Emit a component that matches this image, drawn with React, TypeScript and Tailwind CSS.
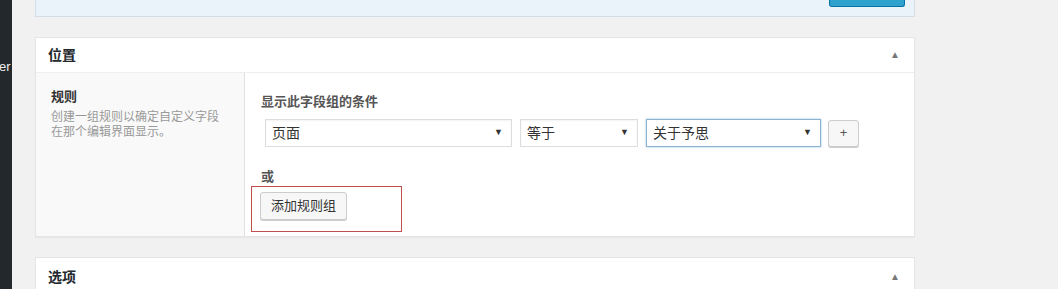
import React from "react";

const font = { fontFamily: '"Liberation Sans", "Noto Sans CJK SC", sans-serif' };

function Select({ value, width, focused = false }: { value: string; width: string; focused?: boolean }) {
    return (
        <div
            className={`${width} h-[28px] flex items-center justify-between pl-[6px] pr-[8px] bg-white border ${
                focused ? "border-[#8fb3cf] shadow-[0_0_2px_rgba(30,140,190,0.5)]" : "border-[#ddd] shadow-[inset_0_1px_2px_rgba(0,0,0,0.05)]"
            }`}
        >
            <span className="text-[14px] text-[#333]">{value}</span>
            <span className="text-[9px] text-[#333]">▼</span>
        </div>
    );
}

function Toggle() {
    return <span className="text-[10px] text-[#777] leading-none">▲</span>;
}

export default function App() {
    return (
        <div className="w-[1058px] h-[289px] overflow-hidden bg-[#f1f1f1] flex" style={font}>
            {/* Admin sidebar edge */}
            <div className="w-[12px] shrink-0 bg-[#23282d] flex">
                <span className="mt-[58px] h-[18px] text-[13px] text-[#eee] whitespace-nowrap leading-[18px] -ml-[1px]">er</span>
            </div>

            <div className="ml-[23px] w-[880px] shrink-0 flex flex-col">
                {/* Publish panel (cut off) */}
                <div className="h-[17px] shrink-0 bg-[#eaf2fa] border border-t-0 border-[#d5dde6] flex justify-end pr-[9px]">
                    <div className="w-[76px] h-[7px] bg-[#2ea2cc] border border-t-0 border-[#0074a2] rounded-b-[3px]" />
                </div>

                {/* 位置 */}
                <div className="mt-[20px] h-[200px] shrink-0 bg-white border border-[#e5e5e5] shadow-[0_1px_1px_rgba(0,0,0,0.04)] flex flex-col">
                    <div className="h-[35px] shrink-0 border-b border-[#eee] flex items-center justify-between pl-[12px] pr-[14px]">
                        <span className="text-[14px] font-bold text-[#23282d]">位置</span>
                        <Toggle />
                    </div>
                    <div className="flex flex-1">
                        <div className="w-[209px] shrink-0 bg-[#f9f9f9] border-r border-[#e1e1e1] pl-[15px] pt-[15px]">
                            <div className="text-[13px] font-bold text-[#333] leading-[18px]">规则</div>
                            <div className="mt-[4px] text-[12px] text-[#999] leading-[15px]">
                                创建一组规则以确定自定义字段
                                <br />
                                在那个编辑界面显示。
                            </div>
                        </div>
                        <div className="flex-1 pl-[16px] pt-[20px]">
                            <div className="text-[13px] font-bold text-[#555] leading-[18px]">显示此字段组的条件</div>
                            <div className="mt-[8px] ml-[4px] flex items-center gap-[8px]">
                                <Select value="页面" width="w-[247px]" />
                                <Select value="等于" width="w-[118px]" />
                                <Select value="关于予思" width="w-[175px]" focused />
                                <div className="ml-[-1px] w-[31px] h-[27px] border border-[#ccc] rounded-[3px] bg-[#f7f7f7] shadow-[0_1px_0_#ccc] flex items-center justify-center text-[13px] text-[#555]">
                                    +
                                </div>
                            </div>
                            <div className="mt-[21px] text-[13px] font-bold text-[#555] leading-[18px]">或</div>
                            <div className="-ml-[10px] w-[151px] h-[46px] border border-[#c0504d] pl-[8px] pt-[5px]">
                                <div className="w-[87px] h-[28px] border border-[#ccc] rounded-[3px] bg-[#f7f7f7] shadow-[0_1px_0_#ccc] flex items-center justify-center text-[13px] text-[#333]">
                                    添加规则组
                                </div>
                            </div>
                        </div>
                    </div>
                </div>

                {/* 选项 */}
                <div className="mt-[20px] h-[60px] shrink-0 bg-white border border-[#e5e5e5] flex flex-col">
                    <div className="h-[38px] flex items-center justify-between pl-[12px] pr-[14px]">
                        <span className="text-[14px] font-bold text-[#23282d]">选项</span>
                        <Toggle />
                    </div>
                </div>
            </div>
        </div>
    );
}
